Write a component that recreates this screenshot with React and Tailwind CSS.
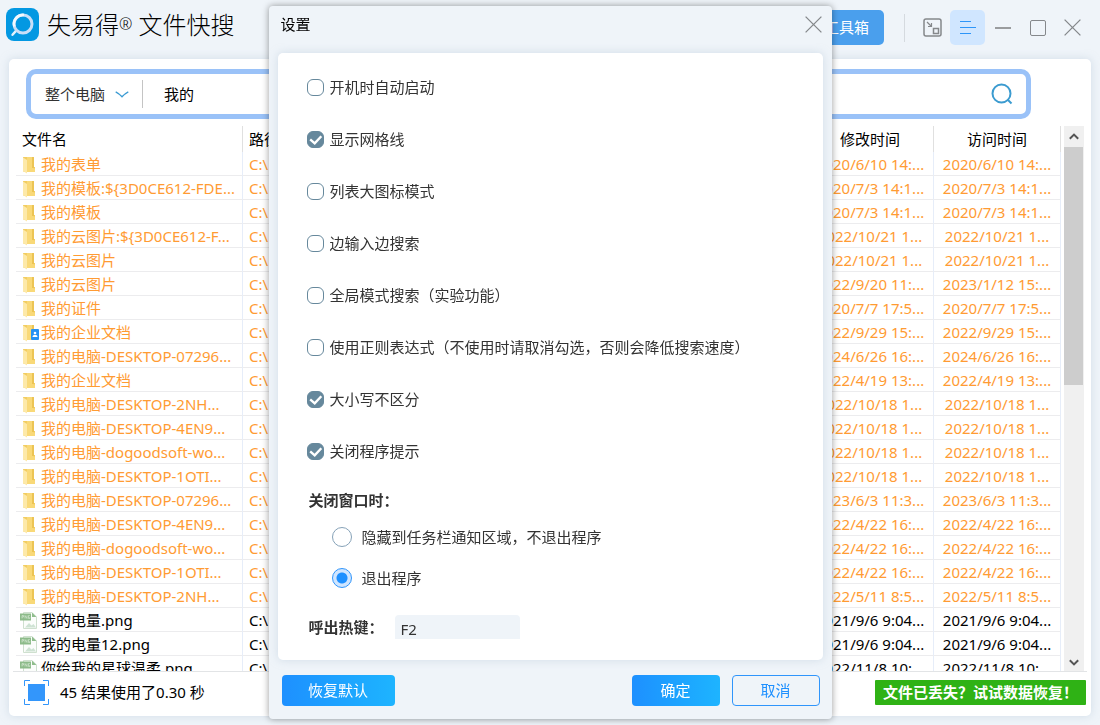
import clsx from "clsx";

const FILES = [
  { name: "我的表单", modified: "2020/6/10 14:...", visited: "2020/6/10 14:..." },
  { name: "我的模板:${3D0CE612-FDE...", modified: "2020/7/3 14:1...", visited: "2020/7/3 14:1..." },
  { name: "我的模板", modified: "2020/7/3 14:1...", visited: "2020/7/3 14:1..." },
  { name: "我的云图片:${3D0CE612-F...", modified: "2022/10/21 1...", visited: "2022/10/21 1..." },
  { name: "我的云图片", modified: "2022/10/21 1...", visited: "2022/10/21 1..." },
  { name: "我的云图片", modified: "2022/9/20 11:...", visited: "2023/1/12 15:..." },
  { name: "我的证件", modified: "2020/7/7 17:5...", visited: "2020/7/7 17:5..." },
  { name: "我的企业文档", modified: "2022/9/29 15:...", visited: "2022/9/29 15:...", shared: true },
  { name: "我的电脑-DESKTOP-07296...", modified: "2024/6/26 16:...", visited: "2024/6/26 16:..." },
  { name: "我的企业文档", modified: "2022/4/19 13:...", visited: "2022/4/19 13:..." },
  { name: "我的电脑-DESKTOP-2NH...", modified: "2022/10/18 1...", visited: "2022/10/18 1..." },
  { name: "我的电脑-DESKTOP-4EN9...", modified: "2022/10/18 1...", visited: "2022/10/18 1..." },
  { name: "我的电脑-dogoodsoft-wo...", modified: "2022/10/18 1...", visited: "2022/10/18 1..." },
  { name: "我的电脑-DESKTOP-1OTI...", modified: "2022/10/18 1...", visited: "2022/10/18 1..." },
  { name: "我的电脑-DESKTOP-07296...", modified: "2023/6/3 11:3...", visited: "2023/6/3 11:3..." },
  { name: "我的电脑-DESKTOP-4EN9...", modified: "2022/4/22 16:...", visited: "2022/4/22 16:..." },
  { name: "我的电脑-dogoodsoft-wo...", modified: "2022/4/22 16:...", visited: "2022/4/22 16:..." },
  { name: "我的电脑-DESKTOP-1OTI...", modified: "2022/4/22 16:...", visited: "2022/4/22 16:..." },
  { name: "我的电脑-DESKTOP-2NH...", modified: "2022/5/11 8:5...", visited: "2022/5/11 8:5..." },
  { name: "我的电量.png", modified: "2021/9/6 9:04...", visited: "2021/9/6 9:04...", image: true },
  { name: "我的电量12.png", modified: "2021/9/6 9:04...", visited: "2021/9/6 9:04...", image: true },
  { name: "你给我的星球温柔.png", modified: "2022/11/8 10:...", visited: "2022/11/8 10:...", image: true },
];

const OPTIONS = [
  { id: "autostart", label: "开机时自动启动" },
  { id: "grid", label: "显示网格线", checked: true },
  { id: "large", label: "列表大图标模式" },
  { id: "instant", label: "边输入边搜索" },
  { id: "global", label: "全局模式搜索（实验功能）" },
  { id: "regex", label: "使用正则表达式（不使用时请取消勾选，否则会降低搜索速度）" },
  { id: "case", label: "大小写不区分", checked: true },
  { id: "confirm", label: "关闭程序提示", checked: true },
];

function Logo() {
  return (
    <svg width="33" height="33" viewBox="0 0 33 33" fill="none">
      <rect width="33" height="33" rx="8" fill="#0398e2" />
      <path d="M10.200 22.600 6.500 26.800" stroke="#e3f1fc" strokeWidth="2.400" strokeLinecap="round" />
      <circle cx="17" cy="16" r="9" stroke="#c9dff8" strokeWidth="3" />
      <path d="M8.300 18.500A9 9 0 0 1 18 7" stroke="#f4f9fe" strokeWidth="2.600" />
    </svg>
  );
}

function FolderIcon({ shared }) {
  return (
    <svg width="20" height="18" viewBox="0 0 20 18" className="shrink-0">
      <path d="M3 1h8v10h4v5H4L3 15z" fill="#f2cd62" />
      <path d="M7 1h6.500v11.500H15V16H7z" fill="#f9d978" />
      <path d="M12 1h2v11h-2z" fill="#ecc454" />
      <path d="M3 1.500 7 4v13.500L3 15z" fill="#fde9a9" />
      {shared && (
        <>
          <rect x="11" y="5" width="8" height="11" rx="1" fill="#2492f5" />
          <circle cx="15" cy="9" r="1.300" fill="#fff" />
          <path d="M12.500 13c0-3 5-3 5 0z" fill="#fff" />
        </>
      )}
    </svg>
  );
}

function PngIcon() {
  return (
    <svg width="20" height="18" viewBox="0 0 20 18" className="shrink-0">
      <path d="M3.500.5H12l4.500 4.500V16.500h-13z" fill="#fbfdfb" stroke="#cfe0cf" />
      <path d="M12 .5 16.500 5H12z" fill="#8fbd8c" />
      <path d="M5 15.500 9 11l2.500 2.500L13.500 12l2.500 3.500z" fill="#cfe3d4" />
      <rect y="1.500" width="11" height="7" fill="#8dbb8a" />
      <path d="M2 6.500v-3h1.500v1.500H2M5 6.500v-3l2 3v-3M9.800 3.500H8.500v3h1.300V5" stroke="#d5e8d3" strokeWidth=".7" fill="none" />
    </svg>
  );
}

function CloseIcon() {
  return (
    <svg width="17" height="17" viewBox="0 0 17 17" stroke="#85888b" strokeWidth="1.300">
      <path d="M.6.6l15.800 15.800M16.400.6.6 16.400" />
    </svg>
  );
}

function WindowButton({ label, active, children }) {
  return (
    <button
      type="button"
      aria-label={label}
      className={clsx(
        "flex size-[35px] items-center justify-center rounded-[5px]",
        active && "bg-[#d0e6ff]",
      )}
    >
      {children}
    </button>
  );
}

function TitleBar() {
  return (
    <header className="flex h-[59px] shrink-0 items-start justify-between pr-[10px] pl-[6px]">
      <div className="flex items-center gap-2 pt-2">
        <Logo />
        <h1 className="text-2xl leading-8 font-light text-black">
          失易得<span className="align-[4px] text-base">®</span> 文件快搜
        </h1>
      </div>

      <div className="flex items-center pt-[10px]">
        <button
          type="button"
          className="h-[35px] rounded-[5px] bg-[#4a9fed] pr-[15px] pl-10 text-[15px] text-white"
        >
          工具箱
        </button>
        <div className="mr-[10px] ml-5 h-7 w-px bg-[#d5dadf]" />
        <WindowButton label="迷你模式">
          <svg width="19" height="19" viewBox="0 0 19 19" fill="none" stroke="#85888b" strokeWidth="1.500">
            <rect x="1" y="1" width="17" height="17" rx="2" />
            <rect x="10.500" y="10.500" width="5" height="5" />
            <path d="M4 4l4 4M8.500 5v3.500H5" strokeWidth="1.200" />
          </svg>
        </WindowButton>
        <WindowButton label="菜单" active>
          <svg width="17" height="15" viewBox="0 0 17 15" stroke="#2d95f8">
            <path d="M1 1.500h11M1 7.500h16M1 13.500h11" />
          </svg>
        </WindowButton>
        <WindowButton label="最小化">
          <span className="h-0.5 w-4 bg-[#9a9c9e]" />
        </WindowButton>
        <WindowButton label="最大化">
          <span className="size-4 rounded-[2px] border border-[#85888b]" />
        </WindowButton>
        <WindowButton label="关闭">
          <CloseIcon />
        </WindowButton>
      </div>
    </header>
  );
}

function SearchBar() {
  return (
    <form className="mt-[10px] mr-[60px] ml-[17px] flex h-[50px] shrink-0 items-center rounded-[10px] border-[5px] border-[#9ac2f8] bg-white pr-[13px] pl-[14px]">
      <label className="relative flex items-center">
        <span className="sr-only">搜索范围</span>
        <select className="h-8 w-[84px] appearance-none bg-transparent text-[15px] leading-8 text-[#333] outline-none">
          <option>整个电脑</option>
        </select>
        <svg
          width="14"
          height="7"
          viewBox="0 0 14 7"
          className="pointer-events-none absolute right-0"
          fill="none"
          stroke="#3b9bd3"
          strokeWidth="1.300"
        >
          <path d="M.7.8C3 2 5.500 4 7 5.700 8.500 4 11 2 13.300.8" />
        </svg>
      </label>
      <div className="ml-[13px] h-7 w-px bg-[#c4c4c4]" />
      <input
        type="text"
        aria-label="搜索"
        defaultValue="我的"
        className="ml-[21px] min-w-0 flex-1 bg-transparent text-[15px] text-black outline-none"
      />
      <button type="submit" aria-label="开始搜索">
        <svg width="22" height="22" viewBox="0 0 22 22" fill="none" stroke="#3b9bd0" strokeWidth="2">
          <circle cx="10.500" cy="10.500" r="9" />
          <path d="M16.500 16.500l4 4" />
        </svg>
      </button>
    </form>
  );
}

function FileTable() {
  return (
    <table className="w-full table-fixed border-separate border-spacing-0 text-[15px] leading-[21px] whitespace-nowrap">
      <thead>
        <tr className="h-[26px] text-black">
          <th className="w-[227px] border-r border-[#e0e0e0] p-0 pl-[6px] text-left font-normal">文件名</th>
          <th className="border-r border-[#e0e0e0] p-0 pl-[6px] text-left font-normal">路径</th>
          <th className="w-[127px] border-r border-[#e0e0e0] p-0 text-center font-normal">修改时间</th>
          <th className="w-[127px] border-r border-[#e0e0e0] p-0 text-center font-normal">访问时间</th>
        </tr>
      </thead>
      <tbody>
        {FILES.map((file, i) => (
          <tr
            key={i}
            className={clsx(
              "h-6 *:border-r *:border-b *:border-r-[#e6edf9] *:border-b-[#ececee] *:p-0 *:pt-[2px]",
              file.image ? "text-black" : "text-[#ff9b33]",
            )}
          >
            <td>
              <div className="flex items-center gap-px pl-1">
                {file.image ? <PngIcon /> : <FolderIcon shared={file.shared} />}
                {file.name}
              </div>
            </td>
            <td>
              <div className="pl-[6px]">C:\</div>
            </td>
            <td className="text-center">{file.modified}</td>
            <td className="text-center">{file.visited}</td>
          </tr>
        ))}
      </tbody>
    </table>
  );
}

function ScrollBar() {
  return (
    <div className="flex w-5 shrink-0 flex-col bg-[#f0f0f0]">
      <button type="button" aria-label="向上滚动" className="flex h-[21px] items-center justify-center">
        <svg width="10" height="7" viewBox="0 0 10 7" fill="none" stroke="#555" strokeWidth="2">
          <path d="M.8 5.800 5 1.600l4.200 4.200" />
        </svg>
      </button>
      <div className="min-h-0 flex-1">
        <div className="mr-px h-[47%] bg-[#cdcdcd]" />
      </div>
      <button type="button" aria-label="向下滚动" className="flex h-[18px] items-center justify-center">
        <svg width="10" height="7" viewBox="0 0 10 7" fill="none" stroke="#555" strokeWidth="2">
          <path d="M.8 1.200 5 5.400l4.200-4.200" />
        </svg>
      </button>
    </div>
  );
}

function StatusBar() {
  return (
    <footer className="mx-1 flex h-[45px] shrink-0 items-center justify-between border-t border-[#e2e4e6] pr-[1px] pb-1 pl-[11px]">
      <div className="flex items-center gap-[11px] text-[15px] text-black">
        <svg width="25" height="25" viewBox="0 0 25 25" fill="none" stroke="#3396fb">
          <rect x="4" y="4" width="17" height="17" fill="#3396fb" stroke="none" />
          <path d="M.5 6V.5H6M19 .5h5.500V6M24.500 19v5.500H19M6 24.500H.5V19" />
        </svg>
        <span>45 结果使用了0.30 秒</span>
      </div>
      <button type="button" className="h-[25px] rounded-[1px] bg-[#2fb215] px-2 text-[15px] leading-[25px] font-bold text-white">
        文件已丢失？试试数据恢复！
      </button>
    </footer>
  );
}

function SettingOption({ id, label, checked }) {
  return (
    <div className="flex h-[52px] items-center gap-[6px]">
      <span className="relative flex">
        <input
          id={id}
          type="checkbox"
          defaultChecked={checked}
          className="peer size-[17px] appearance-none rounded-[6px] border border-[#66889c] bg-white checked:bg-[#66889c]"
        />
        <svg
          width="17"
          height="17"
          viewBox="0 0 17 17"
          className="pointer-events-none absolute inset-0 hidden peer-checked:block"
          fill="none"
          stroke="#fff"
          strokeWidth="2.400"
        >
          <path d="M3.200 8.300l4.500 4 6.600-7" />
        </svg>
      </span>
      <label htmlFor={id} className="text-[15px]">
        {label}
      </label>
    </div>
  );
}

function CloseOption({ id, label, checked }) {
  return (
    <div className="flex h-[41px] items-center gap-[10px] pl-[25px]">
      <input
        id={id}
        type="radio"
        name="on-close"
        defaultChecked={checked}
        className="size-5 appearance-none rounded-full border border-[#86a2b8] bg-white checked:border-[#2f95fb] checked:bg-[radial-gradient(circle,#1e90ff_5px,#cfe5ff_6px)]"
      />
      <label htmlFor={id} className="pt-[2px] text-[15px]">
        {label}
      </label>
    </div>
  );
}

function SettingsDialog() {
  return (
    <div className="fixed inset-0 flex items-center justify-center">
      <div
        role="dialog"
        aria-label="设置"
        className="w-[563px] rounded-[4px] bg-[#eff4f9] text-[#333] shadow-[0_0_7px_rgba(0,0,0,0.4)]"
      >
        <div className="flex h-[47px] items-start justify-between pt-[10px] pr-[10px] pl-3">
          <h2 className="text-[15px] leading-[17px] text-black">设置</h2>
          <button type="button" aria-label="关闭设置">
            <CloseIcon />
          </button>
        </div>

        <div className="mx-[9px] rounded-[5px] bg-white pt-2 pr-4 pb-[21px] pl-[29px] shadow-[0_0_8px_rgba(180,198,215,0.5)]">
          {OPTIONS.map((option) => (
            <SettingOption key={option.id} {...option} />
          ))}

          <h3 className="flex h-[39px] items-center pt-2 pl-[2px] text-[15px] font-bold">关闭窗口时：</h3>
          <CloseOption id="hide" label="隐藏到任务栏通知区域，不退出程序" />
          <CloseOption id="exit" label="退出程序" checked />

          <div className="mt-[17px] flex h-6 items-center gap-[11px] pl-[2px] text-[15px]">
            <label htmlFor="hotkey" className="font-bold">
              呼出热键：
            </label>
            <input
              id="hotkey"
              type="text"
              defaultValue="F2"
              className="h-6 w-[125px] rounded-t-[4px] bg-[#eff4f9] px-[6px] pt-1 text-[15px] leading-5 outline-none"
            />
          </div>
        </div>

        <div className="flex items-center gap-3 pt-[15px] pr-3 pb-[13px] pl-[13px] text-[15px]">
          <button
            type="button"
            className="mr-auto h-[31px] w-[113px] rounded-[4px] bg-linear-to-r from-[#1e90ff] to-[#1eb4ff] text-white"
          >
            恢复默认
          </button>
          <button
            type="button"
            className="h-[31px] w-[88px] rounded-[4px] bg-linear-to-r from-[#1e90ff] to-[#1eb4ff] text-white"
          >
            确定
          </button>
          <button type="button" className="h-[31px] w-[88px] rounded-[4px] border border-[#2f95fb] text-[#1e90ff]">
            取消
          </button>
        </div>
      </div>
    </div>
  );
}

export default function App() {
  return (
    <div
      lang="zh-CN"
      className="flex h-screen flex-col overflow-hidden bg-[#eff4f9] font-['Noto_Sans','Noto_Sans_CJK_SC',sans-serif]"
    >
      <TitleBar />
      <main className="mx-[9px] mb-[9px] flex min-h-0 flex-1 flex-col rounded-[5px] bg-white shadow-[0_0_8px_rgba(180,198,215,0.5)]">
        <SearchBar />
        <div className="mt-[7px] flex min-h-0 flex-1 gap-[3px] px-[7px]">
          <div className="h-full min-w-0 flex-1 overflow-hidden">
            <FileTable />
          </div>
          <ScrollBar />
        </div>
        <StatusBar />
      </main>
      <SettingsDialog />
    </div>
  );
}
